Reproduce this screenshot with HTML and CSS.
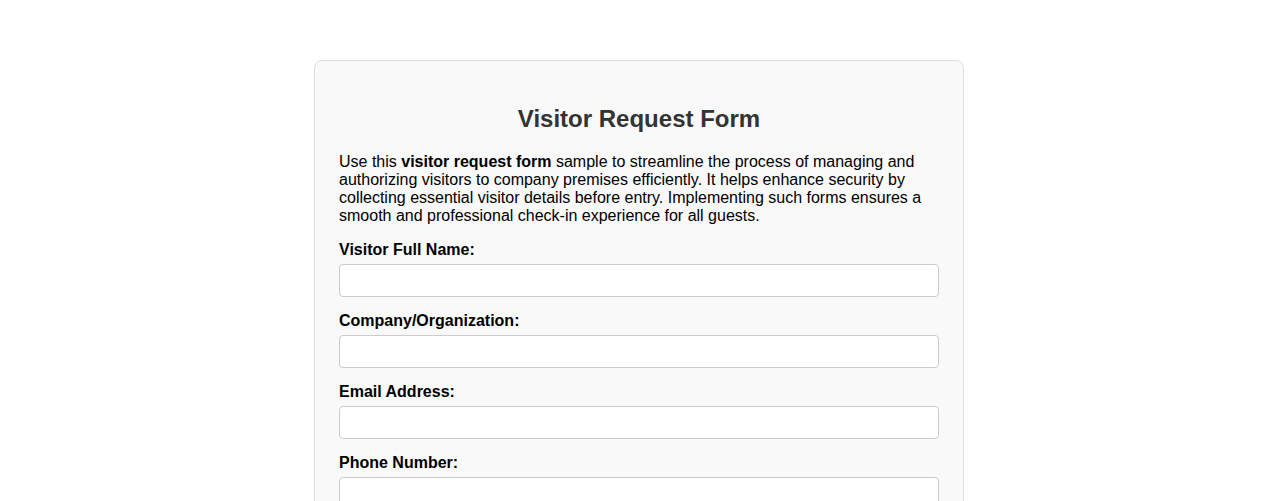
FILE: index.html
```html
<!DOCTYPE html>
<html lang="en">
<head>
<meta charset="utf-8">
<title>Visitor Request Form</title>
<link rel="stylesheet" href="styles.css">
</head>
<body>
<div class="container">
  <h2 class="title">Visitor Request Form</h2>
  <p class="intro">Use this <strong>visitor request form</strong> sample to streamline the process of managing and authorizing visitors to company premises efficiently. It helps enhance security by collecting essential visitor details before entry. Implementing such forms ensures a smooth and professional check-in experience for all guests.</p>
  <form class="form">
    <label class="label" for="name">Visitor Full Name:</label>
    <input class="input" type="text" id="name">
    <label class="label" for="company">Company/Organization:</label>
    <input class="input" type="text" id="company">
    <label class="label" for="email">Email Address:</label>
    <input class="input" type="email" id="email">
    <label class="label" for="phone">Phone Number:</label>
    <input class="input" type="tel" id="phone">
  </form>
</div>
</body>
</html>
```
FILE: styles.css
```css
body {
  margin: 0;
  padding: 60px 0 40px;
  background: #ffffff;
  font-family: "Liberation Sans", Arial, sans-serif;
  color: #000;
}
.container {
  width: 600px;
  margin: 0 auto;
  padding: 24px;
  background: #f9f9f9;
  border: 1px solid #ddd;
  border-radius: 8px;
}
.title {
  text-align: center;
  color: #333;
  font-size: 24px;
  margin: 20px 0 20px;
}
.intro {
  font-size: 16px;
  margin: 0 0 16px;
}
.form {
  display: block;
}
.label {
  display: block;
  font-weight: bold;
  font-size: 16px;
  margin-bottom: 5px;
}
.input {
  display: block;
  width: 100%;
  box-sizing: border-box;
  padding: 8px;
  border: 1px solid #ccc;
  border-radius: 4px;
  font-family: "Liberation Sans", Arial, sans-serif;
  font-size: 13.33px;
  background: #fff;
  margin: 0 0 15px;
}
```
